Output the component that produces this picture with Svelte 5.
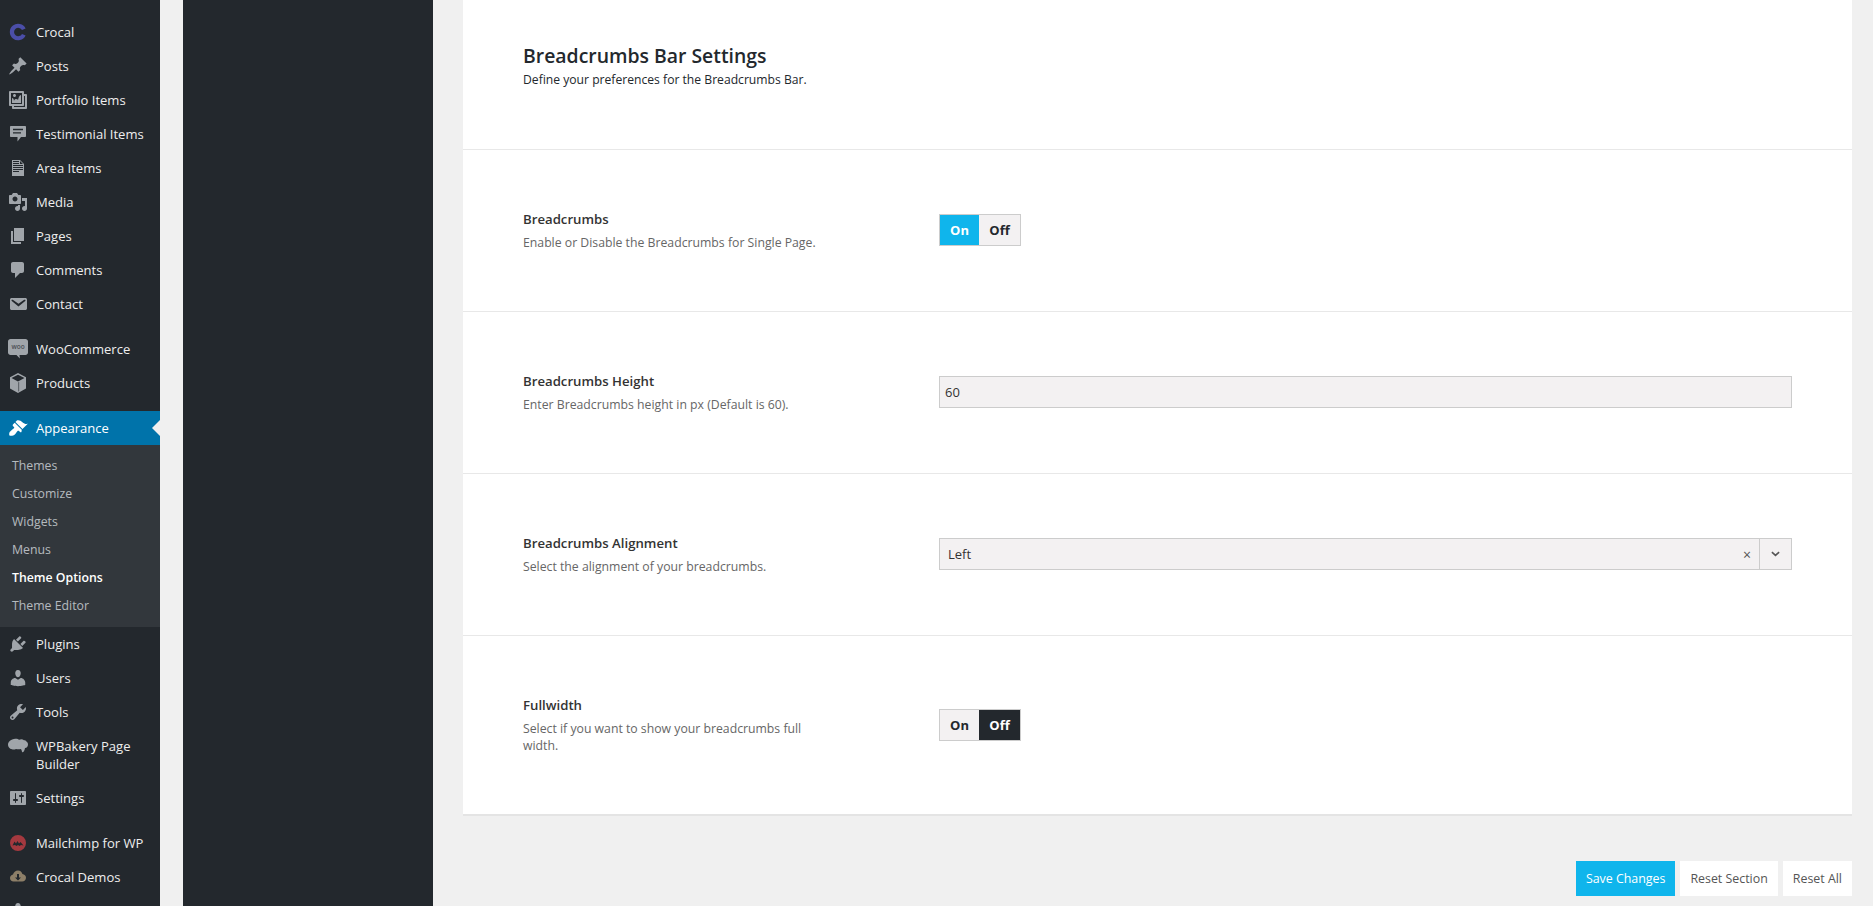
<script>
  const wp = {
    pin: "M10.44 3.02l1.82-1.82 6.36 6.35-1.83 1.82c-1.05-.68-2.48-.57-3.41.36l-.75.75c-.92.93-1.04 2.35-.35 3.41l-1.83 1.82-2.41-2.41-2.8 2.79c-.42.42-3.38 2.71-3.8 2.29s1.86-3.39 2.28-3.81l2.79-2.79L4.1 9.36l1.83-1.82c1.05.69 2.48.57 3.4-.36l.75-.75c.93-.92 1.05-2.35.36-3.41z",
    gallery: "M16 4h1.96c.57 0 1.04.47 1.04 1.04v12.92c0 .57-.47 1.04-1.04 1.04H5.04C4.47 19 4 18.53 4 17.96V16H2.04C1.47 16 1 15.53 1 14.96V2.04C1 1.47 1.47 1 2.04 1h12.92c.57 0 1.04.47 1.04 1.04V4zM3 14h11V3H3v11zm5-8.5C8 4.67 7.33 4 6.5 4S5 4.67 5 5.5 5.67 7 6.5 7 8 6.33 8 5.5zm2 4.5s1-5 3-5v8H4V8c2 0 2 3 2 3s.33-2 2-2 2 1 2 1zm7 7V6h-1v8.96c0 .57-.47 1.04-1.04 1.04H6v1h11z",
    quote: "M3 2h14c.55 0 1 .45 1 1v9c0 .55-.45 1-1 1h-4l-3.500 4.500V13H3c-.55 0-1-.45-1-1V3c0-.55.45-1 1-1zm2 2.800v1.400h10V4.800H5zm0 3.400v1.400h8V8.200H5z",
    doc: "M12 2l4 4v12H4V2h8zM5 3v1h6V3H5zm7 3h3l-3-3v3zM5 5v1h6V5H5zm10 3V7H5v1h10zm0 2V9H5v1h10zm0 2v-1H5v1h10zm-4 2v-1H5v1h6z",
    media: "M13 11V4c0-.55-.45-1-1-1h-1.670L9 1H5L3.670 3H2c-.55 0-1 .45-1 1v7c0 .55.45 1 1 1h10c.55 0 1-.45 1-1zM7 4.500c1.380 0 2.500 1.120 2.500 2.500S8.380 9.500 7 9.500 4.500 8.380 4.500 7 5.620 4.500 7 4.500zM14 6h5v10.500c0 1.380-1.120 2.500-2.500 2.500S14 17.880 14 16.500s1.120-2.500 2.500-2.500c.17 0 .34.02.5.05V9h-3V6zm-4 8.050V13h2v3.500c0 1.380-1.120 2.500-2.500 2.500S7 17.880 7 16.500 8.120 14 9.500 14c.17 0 .34.02.5.05z",
    page: "M6 15V2h10v13H6zm-1 1h8v2H3V5h2v11z",
    comment: "M5 2h9c1.100 0 2 .9 2 2v7c0 1.100-.9 2-2 2h-2l-5 5v-5H5c-1.100 0-2-.9-2-2V4c0-1.100.9-2 2-2z",
    mail: "M3.870 4h13.250C18.370 4 19 4.590 19 5.790v8.420c0 1.190-.63 1.790-1.880 1.790H3.870c-1.250 0-1.880-.6-1.880-1.790V5.790c0-1.200.63-1.790 1.880-1.790zm6.620 8.600l6.740-5.530c.24-.2.430-.66.13-1.070-.29-.41-.82-.42-1.170-.17l-5.700 3.860L4.800 5.830c-.35-.25-.88-.24-1.170.17-.3.41-.11.87.13 1.070z",
    woo: "M2.500 0h15C18.830 0 20 1.170 20 2.500v11c0 1.330-1.170 2.500-2.500 2.500H11.500l.3 3.500-3.300-3.500h-6C1.170 16 0 14.830 0 13.500v-11C0 1.170 1.170 0 2.500 0z",
    box: "M10 0l8 4.200v11.300l-8 4.500-8-4.500V4.200L10 0zM3.500 5l6.500 3.400L16.500 5 10 1.800 3.500 5zm7 4.200v9.300l.6-.3V9z",
    brush: "M14.480 11.060L7.410 3.990l1.500-1.500c.5-.56 2.300-.47 3.510.32 1.210.8 1.430 1.280 2.910 2.100 1.180.64 2.450 1.260 4.450.85zm-.71.71L6.700 4.700 4.930 6.470c-.39.39-.39 1.020 0 1.410l1.060 1.060c.39.39.39 1.030 0 1.420-.6.6-1.430 1.110-2.210 1.690-.35.26-.7.53-1.010.84C1.430 13.230.78 15.820 1.440 17.500c1.680.66 4.260.01 5.610-1.330.31-.31.58-.66.84-1.010.58-.78 1.090-1.610 1.690-2.210.39-.39 1.030-.39 1.420 0l1.060 1.060c.39.39 1.020.39 1.410 0z",
    plug: "M13.110 4.360L9.870 7.600 8 5.730l3.240-3.240c.35-.34 1.050-.2 1.560.32.52.51.66 1.210.31 1.550zm-8 1.770l.91-1.120 9.010 9.010-1.190.84c-.71.71-2.630 1.160-3.820 1.160H6.140L4.900 17.260c-.59.59-1.540.59-2.120 0-.59-.58-.59-1.530 0-2.120l1.240-1.240v-3.880c0-1.130.4-3.190 1.090-3.890zm7.260 3.970l3.240-3.240c.34-.35 1.040-.21 1.550.31.52.51.66 1.210.31 1.550l-3.240 3.250z",
    user: "M10 9.250c-2.270 0-2.730-3.440-2.730-3.440C7 4.020 7.820 2 9.970 2c2.160 0 2.980 2.020 2.710 3.810 0 0-.41 3.440-2.680 3.440zm0 2.570L12.720 10c2.390 0 4.520 2.330 4.520 4.530v2.490s-3.650 1.130-7.240 1.130c-3.650 0-7.240-1.130-7.240-1.130v-2.490c0-2.250 1.940-4.480 4.470-4.480z",
    wrench: "M16.680 9.770c-1.340 1.340-3.300 1.670-4.950.99l-5.410 6.520c-.99.99-2.590.99-3.580 0s-.99-2.590 0-3.570l6.520-5.420c-.68-1.650-.35-3.610.99-4.950 1.280-1.280 3.120-1.620 4.720-1.060l-2.890 2.890 2.820 2.820 2.860-2.870c.53 1.580.18 3.390-1.080 4.650zM3.810 16.210c.4.39 1.040.39 1.430 0 .4-.4.4-1.040 0-1.430-.39-.4-1.030-.4-1.430 0-.39.39-.39 1.030 0 1.430z",
    cloud: "M6 3c2-.7 4-.3 5.200.8C12.500 2.900 14.700 3 16 4.200c1-.1 1.900.4 2.400 1.200 1 .6 1.600 1.700 1.600 3 0 1.800-1.200 3.300-3 3.700-.2 1.500-.7 3-1.600 3.900-.8.400-1.500-.1-1.600-1.100-.1-.9-.5-1.500-1.100-1.900-1.400.5-3.300.5-4.700-.1-1.100.8-2.700.9-4 .4C1.400 12.700 0 10.700 0 8.700 0 5.800 2.800 3.400 6 3z",
    sliders: "M18 16V4c0-.55-.45-1-1-1H3c-.55 0-1 .45-1 1v12c0 .55.45 1 1 1h14c.55 0 1-.45 1-1zM8 11h1c.55 0 1 .45 1 1s-.45 1-1 1H8v1.500c0 .28-.22.5-.5.5s-.5-.22-.5-.5V13H6c-.55 0-1-.45-1-1s.45-1 1-1h1V5.500c0-.28.22-.5.5-.5s.5.22.5.5V11zm5-2h-1c-.55 0-1-.45-1-1s.45-1 1-1h1V5.500c0-.28.22-.5.5-.5s.5.22.5.5V7h1c.55 0 1 .45 1 1s-.45 1-1 1h-1v5.500c0 .28-.22.5-.5.5s-.5-.22-.5-.5V9z",
    crocal: "M17.600 6.400A8.300 8.300 0 1 0 17.600 13.600L14 11.900A4.200 4.200 0 1 1 14 8.100z",
    mc: "M10 2a8 8 0 1 1 0 16 8 8 0 0 1 0-16zM4.500 12.500l2-4 1.500 2 1.500-2.500 1.500 2.500 1.500-1.500 3 3.500-2.500-.5-1.500 1-1.500-1-1.500 1-1.500-1z",
    demo: "M10 3.500c2.300 0 4 1.500 4.400 3.600 2 .2 3.600 1.700 3.600 3.700 0 2.200-1.700 3.700-3.800 3.700H5.500C3.500 14.500 2 13 2 11c0-1.800 1.300-3.200 3-3.500C5.500 5.200 7.500 3.500 10 3.500zM9 7v3.500H7l3 3 3-3h-2V7z"
  };

  const group1 = [
    { name: "Crocal", d: wp.crocal, color: "#4b4ea8" },
    { name: "Posts", d: wp.pin },
    { name: "Portfolio Items", d: wp.gallery },
    { name: "Testimonial Items", d: wp.quote },
    { name: "Area Items", d: wp.doc },
    { name: "Media", d: wp.media },
    { name: "Pages", d: wp.page },
    { name: "Comments", d: wp.comment },
    { name: "Contact", d: wp.mail }
  ];
  const group2 = [
    { name: "WooCommerce", d: wp.woo, woo: true },
    { name: "Products", d: wp.box }
  ];
  const submenu = ["Themes", "Customize", "Widgets", "Menus", "Theme Options", "Theme Editor"];
  const group3 = [
    { name: "Plugins", d: wp.plug },
    { name: "Users", d: wp.user },
    { name: "Tools", d: wp.wrench },
    { name: "WPBakery Page Builder", d: wp.cloud },
    { name: "Settings", d: wp.sliders }
  ];
  const group4 = [
    { name: "Mailchimp for WP", d: wp.mc, color: "#a4393f" },
    { name: "Crocal Demos", d: wp.demo, color: "#8d7f68" },
    { name: "", d: wp.user }
  ];
  const groups = [group1, group2];
  const lowerGroups = [group3, group4];
</script>

{#snippet menuItem(item)}
  <li class="item">
    <svg class="icon" viewBox="0 0 20 20" width="20" height="20" aria-hidden="true">
      <path d={item.d} fill={item.color || "#a0a5aa"} fill-rule="evenodd" />
      {#if item.woo}
        <text x="10" y="10" class="woo">woo</text>
      {/if}
    </svg>
    <span>{item.name}</span>
  </li>
{/snippet}

<div class="page">
  <nav class="adminmenu">
    {#each groups as group}
      <ul class="group">
        {#each group as item}
          {@render menuItem(item)}
        {/each}
      </ul>
    {/each}

    <div class="current">
      <svg class="icon" viewBox="0 0 20 20" width="20" height="20" aria-hidden="true">
        <path d={wp.brush} fill="#fff" />
      </svg>
      <span>Appearance</span>
    </div>
    <ul class="submenu">
      {#each submenu as sub}
        <li class:active={sub === "Theme Options"}>{sub}</li>
      {/each}
    </ul>

    {#each lowerGroups as group}
      <ul class="group">
        {#each group as item}
          {@render menuItem(item)}
        {/each}
      </ul>
    {/each}
  </nav>

  <aside class="optionsnav"></aside>

  <main class="content">
    <section class="panel">
      <header class="head">
        <h2>Breadcrumbs Bar Settings</h2>
        <p>Define your preferences for the Breadcrumbs Bar.</p>
      </header>

      <div class="row">
        <div class="info">
          <h3>Breadcrumbs</h3>
          <p>Enable or Disable the Breadcrumbs for Single Page.</p>
        </div>
        <div class="switch">
          <span class="on">On</span>
          <span>Off</span>
        </div>
      </div>

      <div class="row">
        <div class="info">
          <h3>Breadcrumbs Height</h3>
          <p>Enter Breadcrumbs height in px (Default is 60).</p>
        </div>
        <input type="text" value="60" />
      </div>

      <div class="row">
        <div class="info">
          <h3>Breadcrumbs Alignment</h3>
          <p>Select the alignment of your breadcrumbs.</p>
        </div>
        <div class="select">
          <span class="value">Left</span>
          <span class="clear">×</span>
          <span class="arrow">
            <svg viewBox="0 0 10 6" width="9" height="6" aria-hidden="true">
              <path d="M1 1l4 3.500L9 1" fill="none" stroke="#555" stroke-width="1.800" />
            </svg>
          </span>
        </div>
      </div>

      <div class="row">
        <div class="info">
          <h3>Fullwidth</h3>
          <p>Select if you want to show your breadcrumbs full width.</p>
        </div>
        <div class="switch">
          <span>On</span>
          <span class="off">Off</span>
        </div>
      </div>
    </section>

    <div class="actions">
      <button class="save">Save Changes</button>
      <button>Reset Section</button>
      <button>Reset All</button>
    </div>
  </main>
</div>

<style>
  :global(html),
  :global(body) {
    height: 906px;
    overflow: hidden;
  }
  :global(body) {
    background: #f0f0f0;
    font-family: "Open Sans", sans-serif;
  }
  .page {
    display: flex;
    height: 906px;
    overflow: hidden;
  }
  ul {
    list-style: none;
    margin: 0;
    padding: 0;
  }

  .adminmenu {
    flex: none;
    width: 160px;
    padding-top: 15px;
    background: #23282d;
    color: #eee;
    font-size: 13.05px;
    line-height: 18px;
  }
  .group {
    margin-bottom: 11px;
  }
  .item,
  .current {
    display: flex;
    align-items: flex-start;
    min-height: 34px;
    padding: 8px;
    box-sizing: border-box;
  }
  .icon {
    flex: none;
    margin: -1px 8px -1px 0;
  }
  .woo {
    font-size: 6.5px;
    font-weight: 600;
    fill: #4a4f54;
    text-anchor: middle;
  }
  .current {
    position: relative;
    background: #0073aa;
    color: #fff;
  }
  .current::after {
    content: "";
    position: absolute;
    right: 0;
    top: 9px;
    border: 8px solid transparent;
    border-right-color: #f0f0f0;
    border-left-width: 0;
  }
  .submenu {
    padding: 7px 0;
    background: #32373c;
    color: rgba(240, 245, 250, 0.7);
    font-size: 12.3px;
  }
  .submenu li {
    height: 28px;
    line-height: 28px;
    padding-left: 12px;
  }
  .submenu .active {
    color: #fff;
    font-weight: 600;
  }

  .optionsnav {
    flex: none;
    width: 250px;
    margin-left: 23px;
    background: #23282d;
  }

  .content {
    flex: none;
    width: 1389px;
    margin-left: 30px;
  }
  .panel {
    background: #fff;
    border-bottom: 2px solid #e4e4e4;
  }
  .head {
    height: 149px;
    box-sizing: border-box;
    padding: 42px 60px 0;
    color: #23282d;
  }
  h2 {
    margin: 0;
    font-size: 19.4px;
    font-weight: 600;
    line-height: 27px;
  }
  .head p {
    margin: 2px 0 0;
    font-size: 12.15px;
    line-height: 18px;
  }
  .row {
    display: grid;
    grid-template-columns: 416px 1fr;
    align-items: center;
    padding: 60px;
    border-top: 1px solid #e8e8e8;
  }
  h3 {
    margin: 0 0 6px;
    font-size: 13.2px;
    font-weight: 600;
    line-height: 18px;
    color: #333;
  }
  .info p {
    max-width: 300px;
    margin: 0;
    font-size: 12.25px;
    line-height: 17px;
    color: #666;
  }
  .switch {
    display: flex;
    width: 82px;
    height: 32px;
    margin-top: -1px;
    box-sizing: border-box;
    border: 1px solid #ccc;
    background: #f3f1f2;
    font-weight: 700;
    font-size: 13px;
    color: #23282d;
  }
  .switch span {
    display: flex;
    flex: 1;
    align-items: center;
    justify-content: center;
  }
  .switch span:first-child {
    flex: none;
    width: 39px;
  }
  .switch .on {
    background: #0fb5ec;
    color: #fff;
  }
  .switch .off {
    background: #23282d;
    color: #fff;
  }
  input,
  .select {
    display: flex;
    width: 100%;
    height: 32px;
    margin-top: -1px;
    box-sizing: border-box;
    border: 1px solid #ccc;
    background: #f3f1f2;
    font: inherit;
    font-size: 13px;
    color: #333;
  }
  input {
    padding: 0 5px;
    border-radius: 0;
  }
  .select {
    align-items: center;
  }
  .value {
    flex: 1;
    padding-left: 8px;
  }
  .clear {
    width: 24px;
    text-align: center;
    color: #555;
    font-size: 14px;
  }
  .arrow {
    display: flex;
    align-items: center;
    justify-content: center;
    width: 31px;
    height: 100%;
    border-left: 1px solid #ccc;
  }

  .actions {
    display: flex;
    justify-content: flex-end;
    gap: 5px;
    margin-top: 45px;
  }
  button {
    height: 35px;
    padding: 0 10px;
    border: none;
    background: #fff;
    font: inherit;
    font-size: 12.4px;
    color: #555;
  }
  .save {
    background: #0fb5ec;
    color: #fff;
  }
</style>
